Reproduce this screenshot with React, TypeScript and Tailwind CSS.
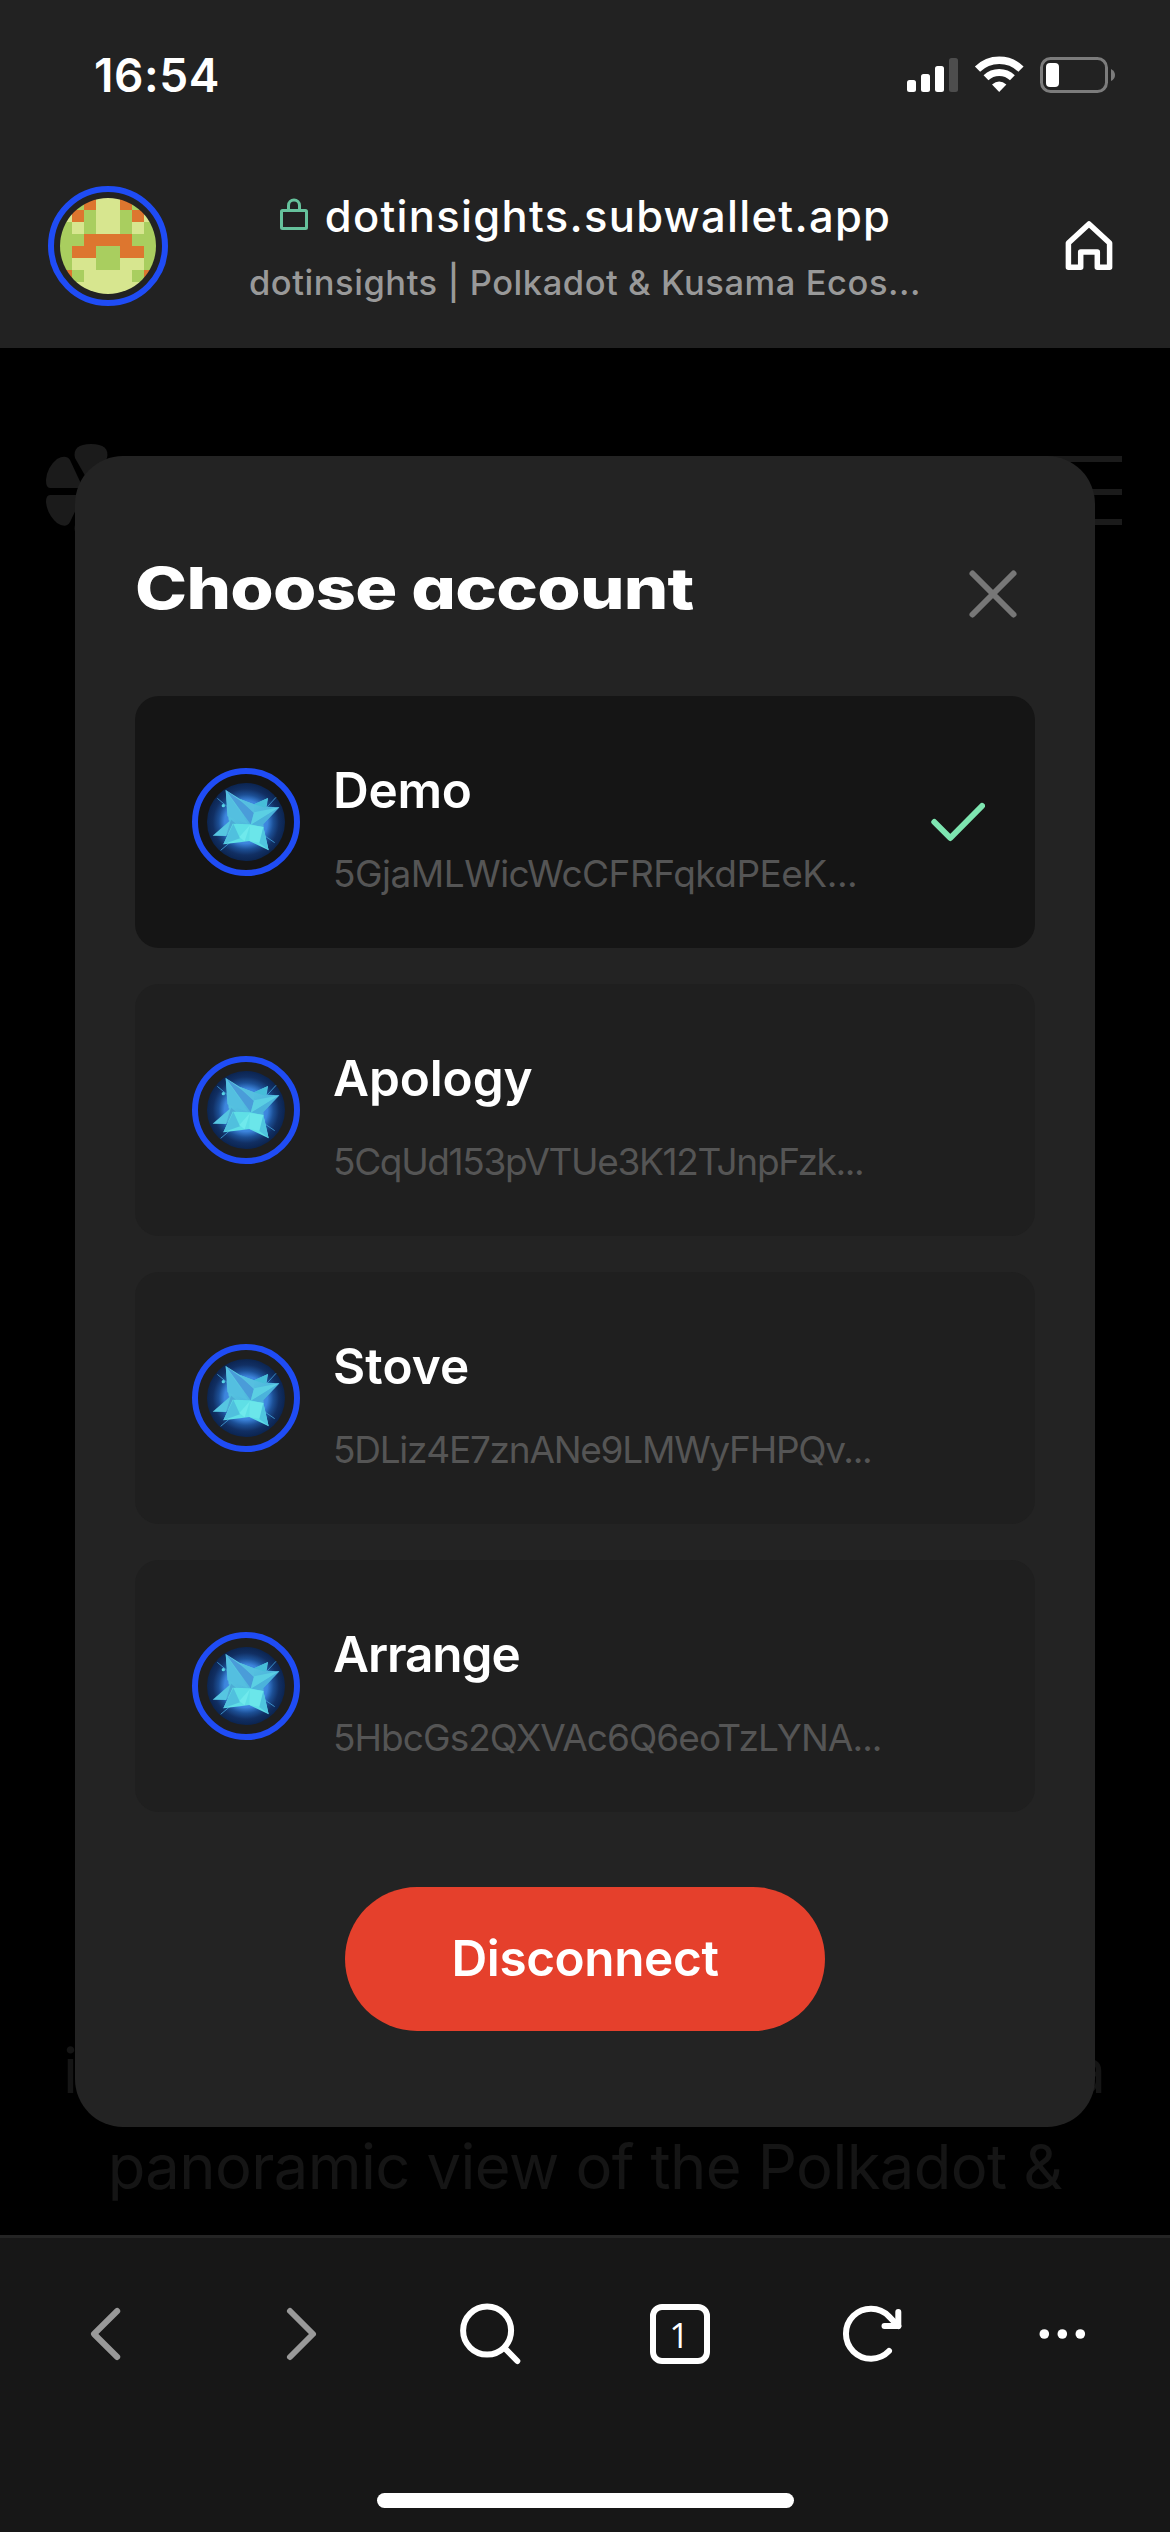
import React from "react";

const IDENTICON = [
  "ggollogg",
  "logllgol",
  "glgllglg",
  "ggoooogg",
  "googgoog",
  "gllggllg",
  "ogllllgo",
  "llllllll",
];

const CELL: Record<string, string> = { g: "#a9ce5f", l: "#d7e68f", o: "#dd762f" };

const accounts = [
  { name: "Demo", address: "5GjaMLWicWcCFRFqkdPEeK...", nameTrack: "tracking-[-0.3px]", track: "tracking-[-0.5px]", selected: true },
  { name: "Apology", address: "5CqUd153pVTUe3K12TJnpFzk...", nameTrack: "tracking-[-0.1px]", track: "tracking-[-1.35px]", selected: false },
  { name: "Stove", address: "5DLiz4E7znANe9LMWyFHPQv...", nameTrack: "tracking-[0.1px]", track: "tracking-[-1.25px]", selected: false },
  { name: "Arrange", address: "5HbcGs2QXVAc6Q6eoTzLYNA...", nameTrack: "tracking-[-1.1px]", track: "tracking-[-0.95px]", selected: false },
];

function StatusBar() {
  return (
    <div className="flex h-[149px] items-center justify-between pl-[94px] pr-[54px]">
      <span className="text-[46px] font-semibold leading-none tracking-[0.6px]">16:54</span>
      <svg width="210" height="40" viewBox="906 54 210 40" fill="none">
        <rect x="907" y="79" width="9" height="12" rx="2.5" fill="#fff" />
        <rect x="921" y="73" width="9" height="18" rx="2.5" fill="#fff" />
        <rect x="935" y="65" width="9" height="26" rx="2.5" fill="#fff" />
        <rect x="949" y="57" width="9" height="34" rx="2.5" fill="#4d4d4d" />
        <path d="M977.5 68.2A31 31 0 0 1 1021 68.2" stroke="#fff" strokeWidth="7.4" />
        <path d="M986 76.8A19 19 0 0 1 1012.4 76.8" stroke="#fff" strokeWidth="7" />
        <path d="M999.2 91L992 83.6Q999.2 77.4 1006.4 83.6Z" fill="#fff" />
        <rect x="1041.5" y="57.5" width="65" height="33" rx="9" stroke="#7c7c7c" strokeWidth="3" />
        <rect x="1046" y="62" width="13" height="24" rx="4" fill="#fff" />
        <path d="M1111 68Q1115 70 1115 74T1111 80Z" fill="#7c7c7c" />
      </svg>
    </div>
  );
}

function Identicon() {
  return (
    <div className="flex size-[120px] items-center justify-center rounded-full border-[6px] border-[#1f4cf5]">
      <div className="grid size-24 grid-cols-8 overflow-hidden rounded-full">
        {IDENTICON.join("")
          .split("")
          .map((c, i) => (
            <span key={i} className="size-3" style={{ backgroundColor: CELL[c] }} />
          ))}
      </div>
    </div>
  );
}

function AddressBar() {
  return (
    <div className="grid h-[194px] grid-cols-[120px_1fr_120px] items-center px-12">
      <Identicon />
      <div className="flex flex-col items-center pt-[7px]">
        <div className="flex h-[66px] items-center gap-[16px]">
          <svg width="30" height="34" viewBox="0 0 30 34" fill="none" stroke="#66c29c" strokeWidth="3" className="-mt-1">
            <rect x="2.5" y="12.5" width="25" height="18" rx="1" />
            <path d="M9.5 12V7.5a5.5 5.5 0 0 1 11 0V12" />
          </svg>
          <span className="whitespace-nowrap text-[43.5px] font-medium leading-none tracking-[1.3px]">dotinsights.subwallet.app</span>
        </div>
        <p className="h-[66px] whitespace-nowrap text-[34.5px] font-medium leading-[66px] tracking-[0.55px] text-[#999]">
          dotinsights | Polkadot &amp; Kusama Ecos...
        </p>
      </div>
      <svg width="66" height="66" viewBox="1056 213 66 66" fill="none" stroke="#fff" strokeWidth="5.5" strokeLinejoin="round" className="justify-self-end">
        <path d="M1068.4 243L1089 224L1109.6 243V267.3H1097.3V252H1080.7V267.3H1068.4Z" />
      </svg>
    </div>
  );
}

function GemAvatar() {
  return (
    <svg width="108" height="108" viewBox="36 39 324 324" fill="none" className="shrink-0">
      <defs>
        <radialGradient id="glow">
          <stop offset="0" stopColor="#5aa8f5" />
          <stop offset="0.55" stopColor="#3c84dc" />
          <stop offset="0.7" stopColor="#1c4f95" />
          <stop offset="0.85" stopColor="#112f63" />
          <stop offset="1" stopColor="#0b2450" />
        </radialGradient>
        <linearGradient id="upper" x1="0" y1="0" x2="1" y2="1">
          <stop offset="0" stopColor="#5fd5e4" />
          <stop offset="1" stopColor="#48a8da" />
        </linearGradient>
      </defs>
      <circle cx="198" cy="201" r="153" stroke="#1f4cf5" strokeWidth="18" />
      <circle cx="198" cy="201" r="117" fill="url(#glow)" />
      <path d="M112 130L210 212L284 263M288 127L210 212L122 286" stroke="#3b8fc8" strokeWidth="3" />
      <path d="M137 105L180 132L222 148L264 129L260 155L298 157L250 207L252 220L165 208L146 196Z" fill="url(#upper)" />
      <path d="M137 105L185 140L222 174L212 208Z" fill="#4a9cd9" />
      <path d="M180 132L222 148L222 174Z" fill="#56bfe0" />
      <path d="M137 105L142 184L205 208Z" fill="#54bfe0" />
      <path d="M222 148L264 129L256 158Z" fill="#46bdd9" />
      <path d="M222 172L298 157L212 210Z" fill="#5bcfe3" />
      <path d="M298 157L250 207L212 210Z" fill="#4bb2db" />
      <path d="M153 194L98 242L138 243L168 206Z" fill="#56c6e1" />
      <path d="M153 194L138 243L168 206Z" fill="#4dabd5" />
      <path d="M158 206L210 208L250 216L266 286L208 258L180 262L130 268Z" fill="#5fdfe6" />
      <path d="M160 206L180 250L130 268Z" fill="#50c0de" />
      <path d="M210 210L250 216L242 264L208 258Z" fill="#6be6ea" />
      <path d="M250 216L266 286L238 264Z" fill="#4fc5df" />
      <path d="M210 210L194 259L178 246Z" fill="#6fe9ec" />
      <circle cx="130" cy="152" r="5" fill="#57d3e6" />
    </svg>
  );
}

function AccountCard({ account }: { account: (typeof accounts)[number] }) {
  return (
    <li
      className={
        "flex h-[252px] items-center rounded-[24px] pl-[57px] pr-[50px] " +
        (account.selected ? "bg-[#151515]" : "bg-[#1f1f1f]")
      }
    >
      <GemAvatar />
      <div className="ml-[33px] flex-1 pt-5">
        <p className={"h-[82px] whitespace-nowrap text-[49.5px] font-semibold leading-[81px] " + account.nameTrack}>{account.name}</p>
        <p className={"h-[82px] whitespace-nowrap text-[37px] leading-[84px] text-[#555] " + account.track}>{account.address}</p>
      </div>
      {account.selected && (
        <svg width="54" height="40" viewBox="931 802 54 40" fill="none" stroke="#7ee6b1" strokeWidth="6" strokeLinecap="round" strokeLinejoin="round">
          <path d="M934.3 822L950.3 838L982 806" />
        </svg>
      )}
    </li>
  );
}

function AccountDialog() {
  return (
    <section className="absolute inset-x-[75px] top-[108px] h-[1671px] rounded-[48px] bg-[#232323] px-[60px]">
      <header className="flex h-60 items-center justify-between pt-[25px]">
        <h1 className="origin-left scale-x-[1.22] whitespace-nowrap text-[57.5px] font-extrabold leading-none tracking-[-0.6px] [font-feature-settings:'cv11']">
          Choose account
        </h1>
        <svg width="60" height="60" viewBox="0 0 60 60" stroke="#777" strokeWidth="6" strokeLinecap="round" className="mr-3 mt-[11px]">
          <path d="M9.5 9.5L50.5 50.5M50.5 9.5L9.5 50.5" />
        </svg>
      </header>
      <ul className="flex flex-col gap-9">
        {accounts.map((a) => (
          <AccountCard key={a.name} account={a} />
        ))}
      </ul>
      <button className="mx-auto mt-[75px] flex h-36 w-[480px] items-center justify-center rounded-full bg-[#e5402c] text-[49.5px] font-semibold leading-none tracking-[-0.4px]">
        Disconnect
      </button>
    </section>
  );
}

function Page() {
  return (
    <main className="relative flex h-[1887px] flex-col justify-between overflow-hidden bg-black">
      <div className="flex items-start justify-between px-[45px] pt-[95px]">
        <svg width="92" height="96" viewBox="44 443 92 96" fill="#1b1b1b">
          <path d="M90 486L74 458Q71 444 90 444T106 458Z" />
          <path d="M82 488H49Q45 488 45 480Q46 467 56 459Q65 454 69 460Z" />
          <path d="M82 495H49Q45 495 45 502Q46 514 56 523Q65 529 69 522Z" />
          <path d="M90 497L74 525Q71 539 90 539T106 525Z" />
        </svg>
        <div className="flex w-[90px] flex-col pr-[3px] pt-[13px]">
          <span className="h-1.5 bg-[#1b1b1b]" />
          <span className="mt-[27px] h-1.5 bg-[#1b1b1b]" />
          <span className="mt-6 h-1.5 bg-[#1b1b1b]" />
        </div>
      </div>
      <div className="pb-[20px] text-[61.5px] leading-[96px] text-[#151515]">
        <p className="flex justify-between pl-[63px] pr-[64px]">
          <span>i</span>
          <span>a</span>
        </p>
        <p className="whitespace-nowrap text-center tracking-[-0.6px]">panoramic view of the Polkadot &amp;</p>
      </div>
      <AccountDialog />
    </main>
  );
}

function NavIcon({ children, muted = false }: { children: React.ReactNode; muted?: boolean }) {
  return (
    <svg
      width="72"
      height="72"
      viewBox="0 0 72 72"
      fill="none"
      stroke={muted ? "#999" : "#fff"}
      strokeWidth="6"
      strokeLinecap="round"
      strokeLinejoin="round"
    >
      {children}
    </svg>
  );
}

function BottomBar() {
  return (
    <footer className="flex h-[297px] flex-col justify-between border-t-[3px] border-[#242424] bg-[#171717] pb-6">
      <nav className="grid grid-cols-6 justify-items-center px-[13px] pt-[60px]">
        <NavIcon muted>
          <path d="M45.2 13L22 36L45.2 59" />
        </NavIcon>
        <NavIcon muted>
          <path d="M27 13L50 36L27 59" />
        </NavIcon>
        <NavIcon>
          <circle cx="33.1" cy="32.6" r="24" />
          <path d="M50.5 50L63.3 63" />
        </NavIcon>
        <div className="my-1.5 flex size-[60px] items-center justify-center rounded-[12px] border-[6px] border-white pr-0.5 font-[Lato,sans-serif] text-[35px] leading-none">
          <span className="font-['Open_Sans',sans-serif]">1</span>
        </div>
        <NavIcon>
          <path d="M54 53A25 25 0 1 1 53.9 18.3L63.3 28" />
          <path d="M63.3 14V28H49.5" />
        </NavIcon>
        <NavIcon>
          <g fill="#fff" stroke="none">
            <circle cx="18.3" cy="36" r="4.8" />
            <circle cx="36.3" cy="36" r="4.8" />
            <circle cx="54.3" cy="36" r="4.8" />
          </g>
        </NavIcon>
      </nav>
      <div className="mx-auto h-[15px] w-[417px] rounded-full bg-white" />
    </footer>
  );
}

export default function App() {
  return (
    <div className="h-[2532px] w-[1170px] overflow-hidden bg-black font-['Inter',sans-serif] text-white">
      <div className="h-[348px] bg-[#222]">
        <StatusBar />
        <AddressBar />
      </div>
      <Page />
      <BottomBar />
    </div>
  );
}
